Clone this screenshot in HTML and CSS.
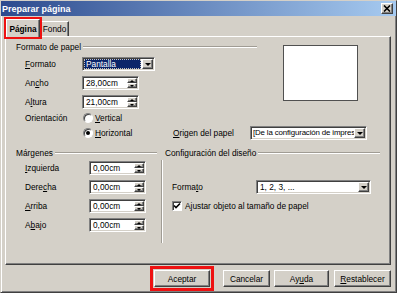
FILE: index.html
```html
<!DOCTYPE html>
<html lang="es">
<head>
    <title>Preparar página</title>
    <link rel="stylesheet" href="styles.css">
</head>
<body>
<div class="window">
    <div class="titlebar">
        <span class="title">Preparar página</span>
        <span class="close">
            <svg width="8" height="7" viewBox="0 0 8 7"><path d="M1 0.5L7 6.5M7 0.5L1 6.5" stroke="#000" stroke-width="1.6"/></svg>
        </span>
    </div>

    <div class="tabs">
        <div class="tab active">Página</div>
        <div class="tab other">Fondo</div>
    </div>

    <div class="panel">
        <div class="paper">
            <div class="paper_fields">
                <div class="heading"><span>Formato de papel</span><i class="rule"></i></div>
                <div class="row first">
                    <span class="lbl lbl_top"><u>F</u>ormato</span>
                    <div class="combo combo_format">
                        <span class="combo_text selected">Pantalla</span>
                        <span class="drop"></span>
                    </div>
                </div>
                <div class="row">
                    <span class="lbl lbl_top">An<u>c</u>ho</span>
                    <div class="spin"><span class="spin_text">28,00cm</span><span class="spin_btns"><span class="up"></span><span class="down"></span></span></div>
                </div>
                <div class="row">
                    <span class="lbl lbl_top">A<u>l</u>tura</span>
                    <div class="spin"><span class="spin_text">21,00cm</span><span class="spin_btns"><span class="up"></span><span class="down"></span></span></div>
                </div>
                <div class="row radio_row">
                    <span class="lbl lbl_top">Orientación</span>
                    <span class="radio"></span><span><u>V</u>ertical</span>
                </div>
            </div>
            <div class="preview"></div>
        </div>

        <div class="row origin_row">
            <span class="lbl lbl_top"></span>
            <span class="radio_opt"><span class="radio checked"></span><span><u>H</u>orizontal</span></span>
            <span class="lbl lbl_origin"><u>O</u>rigen del papel</span>
            <div class="combo combo_origin">
                <span class="combo_text origin_text">[De la configuración de impres</span>
                <span class="drop"></span>
            </div>
        </div>

        <div class="sections">
            <div class="margins">
                <div class="heading"><span>Márgenes</span><i class="rule"></i></div>
                <div class="row first">
                    <span class="lbl lbl_margin"><u>I</u>zquierda</span>
                    <div class="spin"><span class="spin_text">0,00cm</span><span class="spin_btns"><span class="up"></span><span class="down"></span></span></div>
                </div>
                <div class="row">
                    <span class="lbl lbl_margin">Dere<u>c</u>ha</span>
                    <div class="spin"><span class="spin_text">0,00cm</span><span class="spin_btns"><span class="up"></span><span class="down"></span></span></div>
                </div>
                <div class="row">
                    <span class="lbl lbl_margin"><u>A</u>rriba</span>
                    <div class="spin"><span class="spin_text">0,00cm</span><span class="spin_btns"><span class="up"></span><span class="down"></span></span></div>
                </div>
                <div class="row">
                    <span class="lbl lbl_margin">A<u>b</u>ajo</span>
                    <div class="spin"><span class="spin_text">0,00cm</span><span class="spin_btns"><span class="up"></span><span class="down"></span></span></div>
                </div>
            </div>
            <div class="layout">
                <div class="heading layout_heading"><span>Configuración del diseño</span><i class="rule"></i></div>
                <div class="layout_body">
                    <div class="row"></div>
                    <div class="row">
                        <span class="lbl lbl_layout">Forma<u>t</u>o</span>
                        <div class="combo combo_layout">
                            <span class="combo_text">1, 2, 3, ...</span>
                            <span class="drop"></span>
                        </div>
                    </div>
                    <div class="row">
                        <span class="check">
                            <svg width="8" height="8" viewBox="0 0 8 8"><path d="M1 3.5L3 5.5L7 1.5" fill="none" stroke="#000" stroke-width="1.6"/></svg>
                        </span>
                        <span>A<u>j</u>ustar objeto al tamaño de papel</span>
                    </div>
                </div>
            </div>
        </div>
    </div>

    <div class="buttons">
        <button type="button" class="btn btn_ok">Aceptar</button>
        <button type="button" class="btn btn_cancel">Cancelar</button>
        <button type="button" class="btn btn_help">Ay<u>u</u>da</button>
        <button type="button" class="btn btn_reset"><u>R</u>establecer</button>
    </div>
</div>
</body>
</html>
```

FILE: styles.css
```css
body{
    margin: 0;
    font-family: "Liberation Sans", Arial, sans-serif;
    font-size: 8.3px;
    color: #000;
}
u{
    text-underline-offset: 1px;
}
.window{
    box-sizing: border-box;
    width: 397px;
    height: 293px;
    background: #d4d0c8;
    border: 1px solid;
    border-color: #d4d0c8 #404040 #404040 #d4d0c8;
    box-shadow: inset 1px 1px #fff, inset -1px -1px #808080;
}
.titlebar{
    height: 15px;
    display: flex;
    align-items: center;
    justify-content: space-between;
    padding: 0 3px 0 1px;
    background: linear-gradient(to right, #2c4a8e, #a6caf0);
}
.title{
    color: #fff;
    font-weight: bold;
    font-size: 9px;
}
.close{
    box-sizing: border-box;
    width: 12px;
    height: 11px;
    display: flex;
    align-items: center;
    justify-content: center;
    background: #d4d0c8;
    border: 1px solid;
    border-color: #fff #404040 #404040 #fff;
    box-shadow: inset -1px -1px #808080;
}

/* tabs */
.tabs{
    display: flex;
    align-items: flex-end;
    height: 20px;
    padding-left: 5px;
}
.tab{
    box-sizing: border-box;
    display: flex;
    align-items: center;
    justify-content: center;
    background: #d4d0c8;
    border: 1px solid;
    border-bottom: none;
    border-color: #fff #404040 #404040 #fff;
    box-shadow: inset -1px 0 #808080;
}
.tab.active{
    position: relative;
    width: 34px;
    height: 18px;
    margin-bottom: -1px;
    font-weight: bold;
    outline: 2px solid #ee1111;
}
.tab.other{
    width: 29px;
    height: 15px;
}

/* panel */
.panel{
    box-sizing: border-box;
    height: 229px;
    margin: 0 5px 0 4px;
    padding-top: 5px;
    border: 1px solid;
    border-color: #fff #404040 #404040 #fff;
    box-shadow: inset -1px -1px #808080;
}
.heading{
    display: flex;
    align-items: center;
    height: 10px;
}
.rule{
    flex: 1;
    height: 0;
    margin-left: 2px;
    border-top: 1px solid #a09c94;
    border-bottom: 1px solid #fff;
}
.row{
    display: flex;
    align-items: center;
    height: 14px;
    margin-top: 5px;
    white-space: nowrap;
}
.lbl{
    flex: none;
}
.lbl_top{
    width: 57px;
}
.lbl_margin{
    width: 64px;
}
.lbl_layout{
    width: 84px;
}
.lbl_origin{
    width: 77px;
}

.paper{
    display: flex;
}
.paper_fields{
    width: 241px;
    padding-left: 10px;
}
.paper_fields .row{
    margin-left: 9px;
}
.paper_fields .radio_row{
    margin-top: 2px;
}
.preview{
    box-sizing: border-box;
    width: 75px;
    height: 56px;
    margin: 3px 0 0 26px;
    background: #fff;
    border: 1px solid #505050;
}
.origin_row{
    margin: 1px 0 0 19px;
}
.radio_opt{
    display: flex;
    align-items: center;
    width: 91px;
}

/* inputs */
.spin, .combo{
    box-sizing: border-box;
    display: flex;
    height: 14px;
    background: #fff;
    border: 1px solid;
    border-color: #808080 #fff #fff #808080;
    box-shadow: inset 1px 1px #404040, inset -1px -1px #d4d0c8;
    padding: 1px;
}
.spin{
    width: 57px;
}
.spin_text, .combo_text{
    flex: 1;
    overflow: hidden;
    padding-left: 2px;
    line-height: 10px;
}
.origin_text{
    padding-left: 1px;
    font-size: 7.9px;
    letter-spacing: -0.15px;
}
.spin_btns{
    display: flex;
    flex-direction: column;
    width: 10px;
}
.spin_btns span, .drop{
    box-sizing: border-box;
    display: flex;
    align-items: center;
    justify-content: center;
    background: #d4d0c8;
    border: 1px solid;
    border-color: #fff #404040 #404040 #fff;
    box-shadow: inset -1px -1px #808080;
}
.spin_btns span{
    flex: 1;
}
.spin_btns .up::before{
    content: "";
    border-left: 2px solid transparent;
    border-right: 2px solid transparent;
    border-bottom: 2px solid #000;
}
.spin_btns .down::before{
    content: "";
    border-left: 2px solid transparent;
    border-right: 2px solid transparent;
    border-top: 2px solid #000;
}
.drop{
    width: 11px;
    flex: none;
}
.drop::before{
    content: "";
    border-left: 3px solid transparent;
    border-right: 3px solid transparent;
    border-top: 3px solid #000;
}
.combo_format{
    width: 73px;
}
.combo_origin{
    width: 117px;
}
.combo_layout{
    width: 115px;
}
.combo_text.selected{
    margin-right: 1px;
    background: #0a246a;
    color: #fff;
    outline: 1px dotted #c8c4bc;
    outline-offset: -1px;
}

.radio{
    box-sizing: border-box;
    display: flex;
    align-items: center;
    justify-content: center;
    width: 10px;
    height: 10px;
    margin: 0 2px 0 1px;
    background: #fff;
    border-radius: 50%;
    border: 1px solid;
    border-color: #808080 #fff #fff #808080;
    box-shadow: inset 1px 1px #404040;
}
.radio.checked::before{
    content: "";
    width: 4px;
    height: 4px;
    border-radius: 50%;
    background: #000;
}
.check{
    box-sizing: border-box;
    display: flex;
    align-items: center;
    justify-content: center;
    width: 10px;
    height: 10px;
    margin-right: 3px;
    background: #fff;
    border: 1px solid;
    border-color: #808080 #fff #fff #808080;
    box-shadow: inset 1px 1px #404040;
}

/* margin / layout sections */
.sections{
    display: flex;
    margin-top: 8px;
}
.margins{
    box-sizing: border-box;
    width: 155px;
    padding: 0 4px 0 10px;
}
.margins .row{
    margin-left: 9px;
}
.margins .first{
    margin-top: 3px;
}
.layout{
    flex: 1;
    padding-right: 10px;
}
.layout_heading{
    padding-left: 4px;
}
.layout_body{
    box-sizing: border-box;
    height: 83px;
    margin-top: 2px;
    padding: 1px 0 0 10px;
    border-left: 1px solid #a09c94;
    box-shadow: inset 1px 0 #fff;
}
.layout_body .row:first-child{
    margin-top: 0;
}

/* buttons */
.buttons{
    display: flex;
    justify-content: flex-end;
    height: 17px;
    margin-top: 5px;
    padding-right: 5px;
}
.btn{
    box-sizing: border-box;
    height: 17px;
    padding: 0;
    font-family: inherit;
    font-size: 8.3px;
    color: #000;
    background: #d4d0c8;
    border: 1px solid;
    border-color: #fff #404040 #404040 #fff;
    box-shadow: inset -1px -1px #808080;
}
.btn_ok{
    width: 56px;
    outline: 3px solid #ee1111;
    outline-offset: 1px;
}
.btn_cancel{
    width: 47px;
    margin-left: 13px;
}
.btn_help{
    width: 55px;
    margin-left: 4px;
}
.btn_reset{
    width: 57px;
    margin-left: 5px;
}
```
